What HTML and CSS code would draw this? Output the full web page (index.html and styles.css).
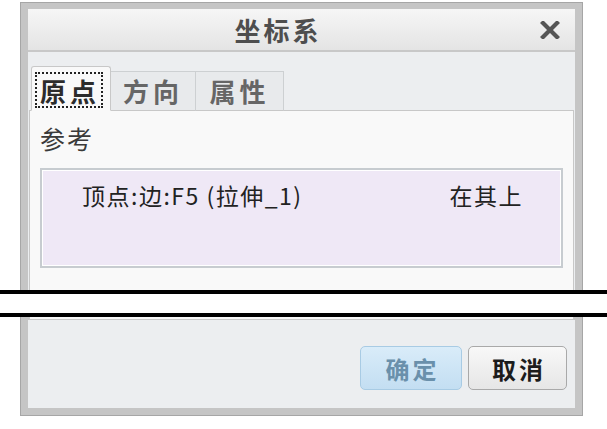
FILE: index.html
```html
<!DOCTYPE html>
<html lang="zh">
<head>
<meta charset="utf-8">
<link rel="stylesheet" href="styles.css">
</head>
<body>
<div class="page">
  <div class="frame frame-top">
    <div class="titlebar">
      <span class="title">坐标系</span>
      <svg class="close" width="20" height="18" viewBox="0 0 20 18"><path d="M3 2 L17 16 M17 2 L3 16" stroke="#555" stroke-width="4.2" stroke-linecap="square"/></svg>
    </div>
    <div class="body">
      <div class="tabs">
        <div class="tab active"><span class="focus">原点</span></div>
        <div class="tab">方向</div>
        <div class="tab">属性</div>
      </div>
      <div class="panel">
        <div class="label">参考</div>
        <div class="listbox">
          <div class="row"><span>顶点:边:F5 (拉伸_1)</span><span>在其上</span></div>
        </div>
      </div>
    </div>
  </div>
  <div class="break"></div>
  <div class="frame frame-bottom">
    <div class="panel-end"></div>
    <div class="buttons">
      <div class="btn ok">确定</div>
      <div class="btn cancel">取消</div>
    </div>
  </div>
</div>
</body>
</html>
```
FILE: styles.css
```css
html, body {
  margin: 0;
  padding: 0;
  background: #ffffff;
}
body {
  font-family: "Noto Sans CJK SC", "Noto Sans", sans-serif;
  width: 607px;
  height: 429px;
  overflow: hidden;
}
.page {
  padding-top: 2px;
}
.frame {
  margin-left: 20px;
  width: 563px;
  box-sizing: border-box;
  background: #c5c5c5;
  border: 1px solid #a6a6a6;
}
.frame-top {
  height: 288px;
  border-bottom: none;
  padding: 6px 7px 0 7px;
  display: flex;
  flex-direction: column;
}
.titlebar {
  height: 41px;
  border-bottom: 2px solid #c8c8c8;
  background: linear-gradient(#f6f6f6, #e4e4e4);
  display: flex;
  align-items: center;
  position: relative;
}
.title {
  flex: 1;
  text-align: center;
  padding-right: 12px;
  font-size: 26px;
  font-weight: 700;
  letter-spacing: 3px;
  color: #4e4e4e;
  line-height: 41px;
}
.close {
  margin-right: 15px;
}
.body {
  flex: 1;
  background: #eceef0;
  display: flex;
  flex-direction: column;
  padding-top: 14px;
}
.tabs {
  display: flex;
  align-items: flex-end;
  padding-left: 3px;
  position: relative;
  z-index: 1;
  margin-bottom: -1px;
}
.tab {
  box-sizing: border-box;
  height: 40px;
  border: 1px solid #cdd0d2;
  border-bottom: 1px solid #c8c8c8;
  background: #e8eaec;
  color: #666;
  font-size: 26px;
  font-weight: 700;
  letter-spacing: 4px;
  display: flex;
  align-items: center;
  justify-content: center;
  line-height: 1;
}
.tab:nth-child(2) {
  width: 85px;
  border-left: none;
}
.tab:nth-child(3) {
  width: 88px;
  border-left: none;
}
.tab.active {
  width: 80px;
  height: 45px;
  background: #f9f9f9;
  border-color: #c8c8c8;
  border-bottom: 1px solid #f9f9f9;
  border-radius: 3px 3px 0 0;
  justify-content: flex-start;
  align-items: flex-start;
  padding: 5px 0 0 3px;
}
.focus {
  display: block;
  border: 2px dotted #222;
  color: #2c2c2c;
  padding: 4px 1px 3px 3px;
  line-height: 1;
  height: 36px;
  box-sizing: border-box;
}
.panel {
  flex: 1;
  margin-left: 1px;
  margin-right: 1px;
  background: #f9f9f9;
  border: 1px solid #c8c8c8;
  border-bottom: none;
  padding: 12px 10px 0 10px;
}
.label {
  font-size: 25px;
  line-height: 30px;
  color: #3a3a3a;
  letter-spacing: 2px;
  margin-bottom: 15px;
}
.listbox {
  height: 100px;
  box-sizing: border-box;
  border: 2px solid #c7ccd0;
  box-shadow: inset 0 0 0 1px #ffffff;
  background: #efe8f6;
  padding: 11px 38px 0 40px;
}
.row {
  display: flex;
  justify-content: space-between;
  font-size: 23px;
  line-height: 28px;
  color: #222;
  letter-spacing: 1.5px;
}
.break {
  height: 19px;
  border-top: 4px solid #000;
  border-bottom: 4px solid #000;
  background: #fff;
}
.frame-bottom {
  border-top: none;
  padding: 0 7px 7px 7px;
  height: 99px;
  display: flex;
  flex-direction: column;
}
.panel-end {
  height: 2px;
  margin: 0 1px;
  background: #f9f9f9;
  border: 1px solid #c8c8c8;
  border-top: none;
}
.buttons {
  flex: 1;
  background: #eceef0;
  display: flex;
  justify-content: flex-end;
  align-items: flex-start;
  gap: 6px;
  padding: 26px 8px 0 0;
}
.btn {
  box-sizing: border-box;
  height: 44px;
  border-radius: 5px;
  font-size: 24px;
  font-weight: 700;
  letter-spacing: 3px;
  display: flex;
  align-items: center;
  justify-content: center;
  padding-left: 3px;
}
.ok {
  width: 102px;
  background: linear-gradient(#d9ecf9, #c3def2);
  border: 1px solid #a8cbe4;
  color: #6a90ab;
}
.cancel {
  width: 99px;
  background: linear-gradient(#f8f8f8, #e6e6e6);
  border: 1px solid #a9a9a9;
  color: #1c1c1c;
}
```
